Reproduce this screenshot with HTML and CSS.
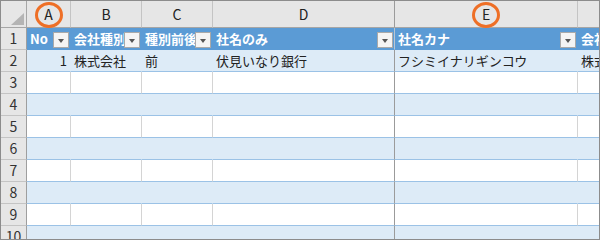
FILE: index.html
```html
<!doctype html>
<html lang="ja">

<head>
	<meta charset="utf-8">
	<title>テーブル</title>
	<link rel="stylesheet" href="styles.css">
</head>

<body>

	<div class="sheet">
		<!-- column heads -->
		<div class="ch corner"><span class="tri"></span></div>
		<div class="ch mark">A<span class="ring"></span></div>
		<div class="ch">B</div>
		<div class="ch">C</div>
		<div class="ch split">D</div>
		<div class="ch mark">E<span class="ring"></span></div>
		<div class="ch last"></div>

		<!-- table header row -->
		<div class="row head">
			<div class="rh">1</div>
			<div class="cell"><span class="txt">No</span><span class="drop"></span></div>
			<div class="cell"><span class="txt">会社種別</span><span class="drop"></span></div>
			<div class="cell"><span class="txt">種別前後</span><span class="drop"></span></div>
			<div class="cell split"><span class="txt">社名のみ</span><span class="drop"></span></div>
			<div class="cell"><span class="txt">社名カナ</span><span class="drop"></span></div>
			<div class="cell last"><span class="txt">会社</span></div>
		</div>

		<div class="row band">
			<div class="rh">2</div>
			<div class="cell num">1</div>
			<div class="cell">株式会社</div>
			<div class="cell">前</div>
			<div class="cell split">伏見いなり銀行</div>
			<div class="cell">フシミイナリギンコウ</div>
			<div class="cell last">株式</div>
		</div>

		<div class="row plain">
			<div class="rh">3</div>
			<div class="cell"></div><div class="cell"></div><div class="cell"></div>
			<div class="cell split"></div><div class="cell"></div><div class="cell last"></div>
		</div>
		<div class="row band">
			<div class="rh">4</div>
			<div class="cell"></div><div class="cell"></div><div class="cell"></div>
			<div class="cell split"></div><div class="cell"></div><div class="cell last"></div>
		</div>
		<div class="row plain">
			<div class="rh">5</div>
			<div class="cell"></div><div class="cell"></div><div class="cell"></div>
			<div class="cell split"></div><div class="cell"></div><div class="cell last"></div>
		</div>
		<div class="row band">
			<div class="rh">6</div>
			<div class="cell"></div><div class="cell"></div><div class="cell"></div>
			<div class="cell split"></div><div class="cell"></div><div class="cell last"></div>
		</div>
		<div class="row plain">
			<div class="rh">7</div>
			<div class="cell"></div><div class="cell"></div><div class="cell"></div>
			<div class="cell split"></div><div class="cell"></div><div class="cell last"></div>
		</div>
		<div class="row band">
			<div class="rh">8</div>
			<div class="cell"></div><div class="cell"></div><div class="cell"></div>
			<div class="cell split"></div><div class="cell"></div><div class="cell last"></div>
		</div>
		<div class="row plain">
			<div class="rh">9</div>
			<div class="cell"></div><div class="cell"></div><div class="cell"></div>
			<div class="cell split"></div><div class="cell"></div><div class="cell last"></div>
		</div>
		<div class="row band">
			<div class="rh">10</div>
			<div class="cell"></div><div class="cell"></div><div class="cell"></div>
			<div class="cell split"></div><div class="cell"></div><div class="cell last"></div>
		</div>
	</div>

</body>
</html>
```

FILE: styles.css
```css
* {
	box-sizing: border-box;
}

body {
	margin: 0;
	background: #ffffff;
	font-family: "Noto Sans CJK JP", "Noto Sans", sans-serif;
}

.sheet {
	width: 600px;
	height: 240px;
	overflow: hidden;
	border: 1px solid #8c8c8c;
	display: grid;
	grid-template-columns: 26px 44px 71px 71px 182px 183px 1fr;
	grid-template-rows: 27px repeat(10, 22px);
}

.row {
	display: contents;
}

/* column heads */
.ch {
	position: relative;
	background: #e6e6e6;
	border-right: 1px solid #c4c4c4;
	border-bottom: 1px solid #a6a6a6;
	color: #222;
	font-size: 14px;
	line-height: 26px;
	text-align: center;
}

.ch.split {
	border-right-color: #9b9b9b;
}

.ch.last {
	border-right: none;
}

.corner {
	border-right-color: #a6a6a6;
}

.tri {
	position: absolute;
	right: 2px;
	bottom: 2px;
	width: 0;
	height: 0;
	border-left: 13px solid transparent;
	border-bottom: 12px solid #b4b4b4;
}

.ring {
	position: absolute;
	left: 50%;
	top: 1px;
	width: 28px;
	height: 26px;
	margin-left: -14px;
	border: 3px solid #ee6f26;
	border-radius: 50%;
}

/* row heads */
.rh {
	background: #e6e6e6;
	border-right: 1px solid #9e9e9e;
	border-bottom: 1px solid #c4c4c4;
	color: #333;
	font-size: 14px;
	line-height: 21px;
	text-align: center;
}

/* cells */
.cell {
	overflow: hidden;
	white-space: nowrap;
	padding-left: 3px;
	font-size: 13px;
	line-height: 21px;
	color: #222;
	border-right: 1px solid #d4d4d4;
	border-bottom: 1px solid #9bc2e6;
}

.cell.last {
	border-right: none;
}

.cell.split {
	border-right-color: #9b9b9b;
}

.cell.num {
	text-align: right;
	padding-right: 3px;
}

.band .cell {
	background: #ddebf7;
	border-right-color: #ddebf7;
}

.plain .cell {
	background: #ffffff;
}

.band .cell.split,
.plain .cell.split {
	border-right-color: #9b9b9b;
}

.head .cell {
	position: relative;
	background: #5b9bd5;
	border-right-color: #5b9bd5;
	border-bottom-color: #5b9bd5;
	color: #ffffff;
	font-weight: bold;
}

.head .cell.split {
	border-right-color: #b9c6d2;
}

.drop {
	position: absolute;
	right: 1px;
	bottom: 1px;
	width: 16px;
	height: 16px;
	background: #f4f4f4;
	border: 1px solid #a9a9a9;
}

.drop::after {
	content: "";
	position: absolute;
	left: 4px;
	top: 6px;
	border-left: 3.5px solid transparent;
	border-right: 3.5px solid transparent;
	border-top: 4px solid #555;
}
```
